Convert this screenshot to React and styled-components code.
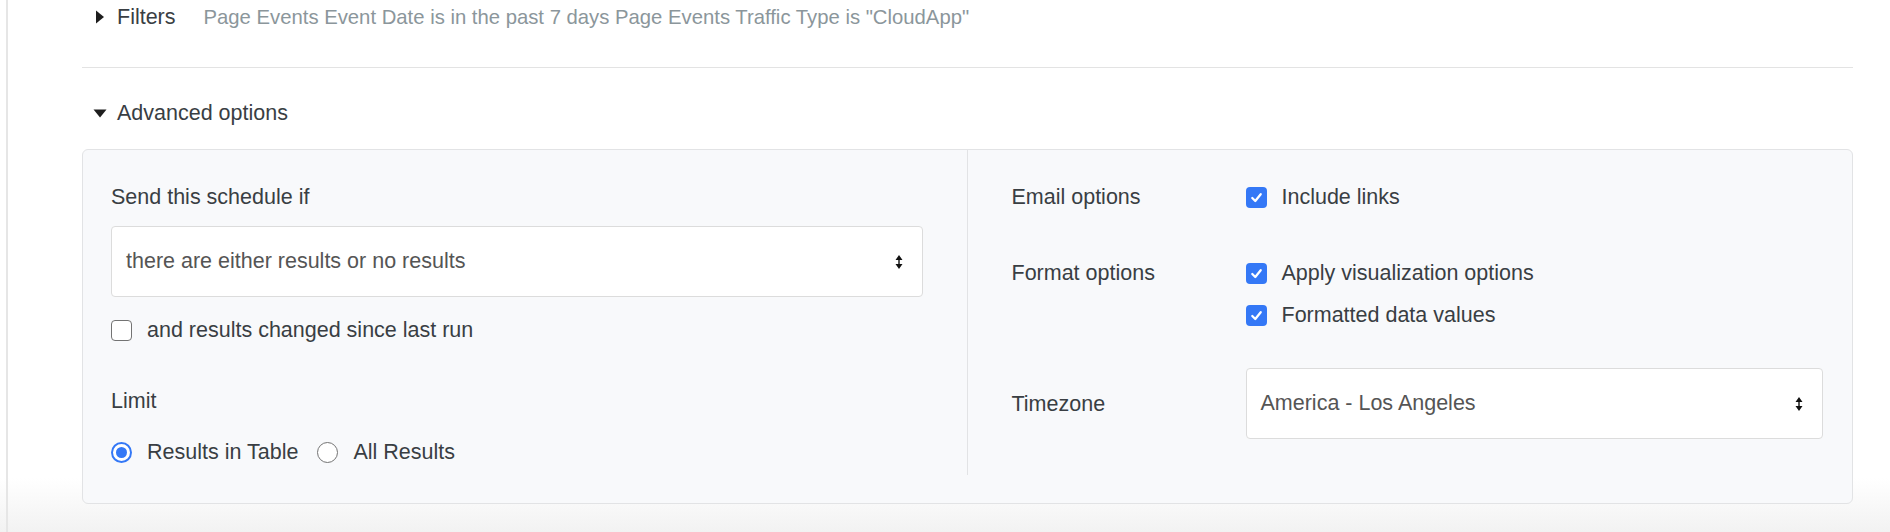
import React from "react";
import styled, { createGlobalStyle } from "styled-components";

const GlobalStyle = createGlobalStyle`
  * { box-sizing: border-box; }
  body {
    margin: 0;
    font-family: "Liberation Sans", Arial, sans-serif;
    color: #393e43;
  }
`;

const Page = styled.div`
  min-height: 532px;
  padding-left: 6px;
  background: linear-gradient(to bottom, #fff 0, #fff 478px, #f2f2f2 532px);
`;

const Frame = styled.div`
  min-height: 532px;
  border-left: 2px solid #e6e6e6;
  padding: 2px 37px 0 74px;
`;

const Toggle = styled.div`
  display: flex;
  align-items: center;
  height: 30px;
  padding-left: 9px;
  margin-top: ${(p) => p.$top || 0}px;
  font-size: 21.5px;
  color: #393e43;
`;

const Caret = styled.span`
  width: 17px;
  margin-right: 9px;
  display: flex;
  justify-content: center;
  align-items: center;
`;

const FilterSummary = styled.span`
  margin-left: 28px;
  font-size: 20.3px;
  color: #8b969b;
`;

const Divider = styled.hr`
  margin: 35px 0 0;
  border: 0;
  border-top: 1px solid #e3e3e3;
`;

const Panel = styled.div`
  margin-top: 21px;
  display: grid;
  grid-template-columns: 1fr 1fr;
  background: #f8f9fb;
  border: 1px solid #e2e3e5;
  border-radius: 6px;
  padding-bottom: 28px;
`;

const LeftCol = styled.div`
  padding: 32px 44px 8px 28px;
  border-right: 1px solid #e2e3e5;
`;

const RightCol = styled.div`
  padding: 32px 29px 0 44px;
`;

const Label = styled.div`
  font-size: 21.5px;
  line-height: 30px;
  margin-top: ${(p) => p.$top || 0}px;
`;

const Select = styled.div`
  margin-top: ${(p) => p.$top || 0}px;
  flex: 1;
  height: 71px;
  background: #fff;
  border: 1px solid #dcdcdc;
  border-radius: 4px;
  display: flex;
  align-items: center;
  justify-content: space-between;
  padding: 0 19px 0 14px;
  font-size: 21.5px;
  color: #555;
`;

const Choice = styled.label`
  display: flex;
  align-items: center;
  height: 30px;
  font-size: 21.5px;
  color: #393e43;
  margin-top: ${(p) => p.$top || 0}px;
  margin-right: ${(p) => p.$right || 0}px;
`;

const Box = styled.span`
  width: 21px;
  height: 21px;
  margin-right: 15px;
  border-radius: 4px;
  display: flex;
  align-items: center;
  justify-content: center;
  background: ${(p) => (p.$on ? "#3478f6" : "#fff")};
  border: ${(p) => (p.$on ? "none" : "1.5px solid #737373")};
`;

const Radio = styled.span`
  width: 21px;
  height: 21px;
  margin-right: 15px;
  border-radius: 50%;
  display: flex;
  align-items: center;
  justify-content: center;
  background: #fff;
  border: ${(p) => (p.$on ? "2.5px solid #3478f6" : "1.5px solid #737373")};

  &::after {
    content: "";
    display: ${(p) => (p.$on ? "block" : "none")};
    width: 11px;
    height: 11px;
    border-radius: 50%;
    background: #3478f6;
  }
`;

const RadioRow = styled.div`
  display: flex;
  margin-top: 21px;
`;

const OptionRow = styled.div`
  display: flex;
  align-items: ${(p) => (p.$center ? "center" : "flex-start")};
  margin-top: ${(p) => p.$top || 0}px;
`;

const OptionLabel = styled.div`
  width: 234px;
  flex-shrink: 0;
  font-size: 21.5px;
  line-height: 30px;
`;

const Values = styled.div`
  flex: 1;
  display: flex;
  flex-direction: column;
  gap: 12px;
`;

const Arrows = () => (
  <svg width="8" height="14" viewBox="0 0 8 14">
    <path d="M4 0 L7.5 5 H0.5 Z M4 14 L7.5 9 H0.5 Z" fill="#111" />
    <rect x="3.3" y="4" width="1.4" height="6" fill="#111" />
  </svg>
);

const Check = ({ on }) => (
  <Box $on={on}>
    {on && (
      <svg width="15" height="15" viewBox="0 0 16 16">
        <path d="M3.5 8.5 L6.7 11.8 L12.5 4.5" fill="none" stroke="#fff" strokeWidth="2.4" strokeLinecap="round" strokeLinejoin="round" />
      </svg>
    )}
  </Box>
);

export default function App() {
  return (
    <Page>
      <GlobalStyle />
      <Frame>
        <Toggle>
          <Caret>
            <svg width="10" height="14" viewBox="0 0 10 14">
              <path d="M1 0.5 L9 7 L1 13.5 Z" fill="#1e1e1e" />
            </svg>
          </Caret>
          Filters
          <FilterSummary>
            Page Events Event Date is in the past 7 days Page Events Traffic Type is "CloudApp"
          </FilterSummary>
        </Toggle>
        <Divider />
        <Toggle $top={30}>
          <Caret>
            <svg width="14" height="9" viewBox="0 0 14 9">
              <path d="M0.5 0.5 L13.5 0.5 L7 8.5 Z" fill="#1e1e1e" />
            </svg>
          </Caret>
          Advanced options
        </Toggle>

        <Panel>
          <LeftCol>
            <Label>Send this schedule if</Label>
            <Select $top={14}>
              there are either results or no results
              <Arrows />
            </Select>
            <Choice $top={18}>
              <Check on={false} />
              and results changed since last run
            </Choice>
            <Label $top={41}>Limit</Label>
            <RadioRow>
              <Choice $right={19}>
                <Radio $on />
                Results in Table
              </Choice>
              <Choice>
                <Radio />
                All Results
              </Choice>
            </RadioRow>
          </LeftCol>

          <RightCol>
            <OptionRow>
              <OptionLabel>Email options</OptionLabel>
              <Values>
                <Choice>
                  <Check on />
                  Include links
                </Choice>
              </Values>
            </OptionRow>
            <OptionRow $top={46}>
              <OptionLabel>Format options</OptionLabel>
              <Values>
                <Choice>
                  <Check on />
                  Apply visualization options
                </Choice>
                <Choice>
                  <Check on />
                  Formatted data values
                </Choice>
              </Values>
            </OptionRow>
            <OptionRow $top={38} $center>
              <OptionLabel>Timezone</OptionLabel>
              <Select>
                America - Los Angeles
                <Arrows />
              </Select>
            </OptionRow>
          </RightCol>
        </Panel>
      </Frame>
    </Page>
  );
}
